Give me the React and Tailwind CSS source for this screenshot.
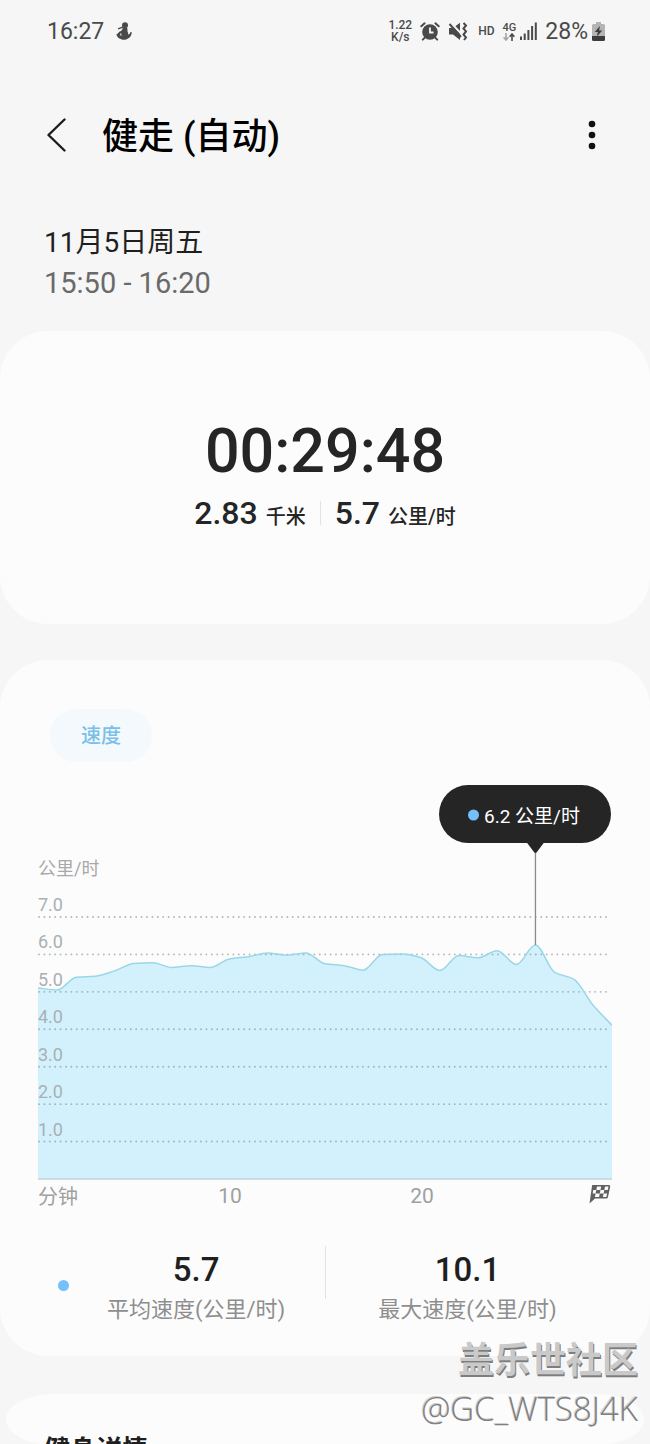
import { useState } from "react";

const speeds = [
  5.1, 5.05, 5.39, 5.42, 5.56, 5.76, 5.78, 5.65, 5.7, 5.65, 5.88, 5.94, 6.04,
  5.98, 6.04, 5.75, 5.7, 5.58, 6.0, 6.01, 5.92, 5.57, 5.97, 5.91, 6.1, 5.73,
  6.25, 5.52, 5.34, 4.65, 4.11,
];

const CHART_WIDTH = 574;
const BASELINE = 394;
const UNIT = 37.43;
const PEAK = 26;

const toX = (i) => (i * CHART_WIDTH) / (speeds.length - 1);
const toY = (v) => BASELINE - v * UNIT;

// monotone cubic, flat at every local high and low
function buildLine(values) {
  const step = toX(1);
  const ys = values.map(toY);
  const slopes = ys.map((y, i) => {
    if (i === 0) return (ys[1] - y) / step;
    if (i === ys.length - 1) return (y - ys[i - 1]) / step;
    const a = (y - ys[i - 1]) / step;
    const b = (ys[i + 1] - y) / step;
    return a * b <= 0 ? 0 : (2 * a * b) / (a + b);
  });
  let d = `M0 ${ys[0]}`;
  for (let i = 1; i < ys.length; i++) {
    const third = step / 3;
    d += ` C${toX(i - 1) + third} ${ys[i - 1] + slopes[i - 1] * third} ${
      toX(i) - third
    } ${ys[i] - slopes[i] * third} ${toX(i)} ${ys[i]}`;
  }
  return d;
}

function StatusBar() {
  return (
    <div className="flex h-[62px] items-center justify-between pl-[47px] pr-[45px] text-[#4a4a4a]">
      <div className="flex items-center gap-3 text-[23px]">
        <span className="pt-0.5">16:27</span>
        <svg width="16" height="18" viewBox="0 0 16 18" fill="currentColor">
          <circle cx="9" cy="3.2" r="3" />
          <path d="M1.800 6.200 7 4.200l.5 1.200L2.400 7.600z" />
          <path d="M6.500 6h4.600c.8 1 .1 2 .4 3.200.3 1.200.9 1.800.7 3.400 1.300-.3 1.900-1.100 2-2.400l1.500-.2c.1 4-2.600 7.200-7 7.700C4.600 18 1 15.800.4 12 1.500 12 2 11.200 2.800 10.200 4 9 6.700 9 6.500 6zM4.400 11.500c-.6 1.200 0 2.200 1.200 2.500-.5-1-.4-1.700 0-2.400z" />
        </svg>
      </div>
      <div className="flex items-center">
        <div className="mr-2 flex flex-col items-center text-xs font-medium leading-3">
          <span>1.22</span>
          <span>K/s</span>
        </div>
        <svg className="mr-2" width="20" height="19" viewBox="0 0 20 19">
          <g fill="none" stroke="currentColor" strokeWidth="2" strokeLinecap="round">
            <path d="M1.300 4.300 4.600 1.300M18.700 4.300l-3.300-3M4.800 15.600l-2 2M15.200 15.600l2 2" />
          </g>
          <circle cx="10" cy="10" r="7.800" fill="currentColor" />
          <path d="M10 5.500V10.500H13.500" fill="none" stroke="#f6f6f6" strokeWidth="1.800" />
        </svg>
        <svg className="mr-[10px]" width="20" height="19" viewBox="0 0 20 19">
          <path d="M1 6h4L12 .8v17.200L5 12.500H1z" fill="currentColor" />
          <path d="M3.500 1.500 13 11.500" stroke="#f6f6f6" strokeWidth="2" />
          <path d="M1.500 2 13 15" stroke="currentColor" strokeWidth="2" />
          <path d="m15.500 1 2.500 2.500-2.500 3L18 9.500l-2.500 3 2.500 3-2 2.500" fill="none" stroke="currentColor" strokeWidth="2" />
        </svg>
        <span className="mr-2 text-xs font-medium">HD</span>
        <div className="flex flex-col items-center text-[11px] font-medium leading-[11px]">
          <span>4G</span>
          <svg width="12" height="8" viewBox="0 0 12 8" fill="none" strokeWidth="1.600">
            <path d="M3 0v7M.6 4.300 3 7l2.400-2.700" stroke="#a5a5a5" />
            <path d="M9 8V1M6.600 3.700 9 1l2.400 2.700" stroke="currentColor" />
          </svg>
        </div>
        <svg className="ml-1 mr-2" width="17" height="18" viewBox="0 0 17 18" fill="currentColor">
          <path d="M0 14.500h2V18H0zM3.700 11.500h2V18h-2zM7.400 8h2v10h-2zM11.100 4h2v14h-2zM14.800.5h2V18h-2z" />
        </svg>
        <span className="mr-1 pt-0.5 text-[23px]">28%</span>
        <svg width="13" height="19" viewBox="0 0 13 19">
          <path d="M4 0h5v2h2.500Q13 2 13 3.500V14H0V3.500Q0 2 1.500 2H4z" fill="#b4b4b4" />
          <path d="M0 14h13v3.500q0 1.500-1.500 1.500h-10Q0 19 0 17.500z" fill="#3c3c3c" />
          <path d="M7.800 4 2.800 10h3l-.8 4.500L10.200 8.500h-3z" fill="#3c3c3c" />
        </svg>
      </div>
    </div>
  );
}

function Header() {
  return (
    <header className="mt-[46px] flex h-[54px] items-center pl-[47px] pr-[46px]">
      <button aria-label="返回" className="mr-9">
        <svg width="19" height="34" viewBox="0 0 19 34" fill="none">
          <path d="M17.500 1.500 1.500 17l16 15.500" stroke="#1c1c1c" strokeWidth="2.400" strokeLinecap="round" strokeLinejoin="round" />
        </svg>
      </button>
      <h1 className="flex-1 pt-1 text-4xl font-medium text-black">健走 (自动)</h1>
      <button aria-label="更多选项" className="w-6">
        <svg className="mx-auto" width="8" height="30" viewBox="0 0 8 30" fill="#111">
          <circle cx="4" cy="4" r="3.300" />
          <circle cx="4" cy="15" r="3.300" />
          <circle cx="4" cy="26" r="3.300" />
        </svg>
      </button>
    </header>
  );
}

function SpeedChart() {
  const line = buildLine(speeds);
  const peakX = toX(PEAK);

  return (
    <svg className="mt-[23px] block w-full" viewBox="0 0 574 430">
      <path d={`${line} V${BASELINE} H0 Z`} fill="#d3f1fd" />
      {[1, 2, 3, 4, 5, 6, 7].map((v) => (
        <g key={v}>
          <line
            x1="1"
            x2="571"
            y1={toY(v)}
            y2={toY(v)}
            stroke="#7b8a90"
            strokeOpacity="0.6"
            strokeWidth="1.900"
            strokeDasharray="0 5.400"
            strokeLinecap="round"
          />
          <text x="0" y={toY(v) - 6} fontSize="18" fill="#a9b0b3">
            {v.toFixed(1)}
          </text>
        </g>
      ))}
      <path d={line} fill="none" stroke="#9ad7e6" strokeWidth="1.500" />
      <line x1="0" x2={CHART_WIDTH} y1={BASELINE} y2={BASELINE} stroke="#c3d3da" strokeWidth="1.500" />

      <text x="0" y="90" fontSize="18" fill="#a8a8a8">公里/时</text>
      <text x="0" y="419" fontSize="20" fill="#a0a0a0">分钟</text>
      <text x="192" y="418" fontSize="21" textAnchor="middle" fill="#a0a0a0">10</text>
      <text x="384" y="418" fontSize="21" textAnchor="middle" fill="#a0a0a0">20</text>

      <g transform="translate(551 400)">
        <path d="M3.500 0H20q1.500 0 1.200 1.500L19 12q-.3 1.500-1.800 1.500H6L.5 18.500 3 1q0-1 .5-1z" fill="#616161" />
        <path d="M8 1.500h4.200l-.7 3.500H7.300zM16 1.500h3.500l-.7 3.500h-3.500zM11.500 5h3.800l-.7 3.500h-3.800zM4.200 5h3.100l-.7 3.500H3.700zM6.600 8.500h4.200l-.7 3.500H5.900zM14.600 8.500h3.500l-.7 3.500h-3.500z" fill="#fafafa" />
      </g>

      <line x1={peakX} x2={peakX} y1="60" y2={toY(speeds[PEAK])} stroke="#8a8a8a" strokeWidth="1.300" />
      <rect x="401" y="0" width="172" height="58" rx="29" fill="#252525" />
      <path d={`M${peakX - 9} 57h18l-7.500 10q-1.500 2-3 0z`} fill="#252525" />
      <circle cx="435.500" cy="30" r="5.500" fill="#74c0fb" />
      <text x="446" y="38" fontSize="19" fill="#fff">6.2 公里/时</text>
    </svg>
  );
}

function Stat({ value, label }) {
  return (
    <div className="pt-1 text-center">
      <p className="text-[33px] font-medium leading-10 text-[#1f1f1f]">{value}</p>
      <p className="text-[22px] leading-10 text-[#8e8e8e]">{label}</p>
    </div>
  );
}

function App() {
  const [tab, setTab] = useState("speed");

  return (
    <div
      lang="zh-CN"
      className="relative min-h-screen overflow-hidden bg-[#f6f6f6] font-['Roboto','Noto_Sans_CJK_SC',sans-serif]"
    >
      <StatusBar />
      <Header />

      <div className="mt-[61px] px-11 leading-10">
        <p className="text-[28px] text-[#1f1f1f]">11月5日周五</p>
        <p className="text-[29px] text-[#6a6a6a]">15:50 - 16:20</p>
      </div>

      <section className="mt-7 rounded-[48px] bg-[#fcfcfc] pb-[91px] pt-[88px] text-[#252525]">
        <p className="text-center text-[61px] font-medium leading-[64px]">00:29:48</p>
        <div className="mt-[10px] flex h-10 items-center justify-center">
          <p className="text-xl font-medium">
            <span className="mr-2 text-[32px]">2.83</span>千米
          </p>
          <div className="mx-[14px] h-6 w-px bg-[#e2e2e2]" />
          <p className="text-xl font-medium">
            <span className="mr-2 text-[32px]">5.7</span>公里/时
          </p>
        </div>
      </section>

      <section className="mt-9 rounded-[48px] bg-[#fcfcfc] px-[38px] pb-[26px] pt-[49px]">
        <button
          onClick={() => setTab("speed")}
          aria-pressed={tab === "speed"}
          className="ml-3 block h-[53px] rounded-full bg-[#f3f9fd] px-[31px] text-xl font-medium text-[#79bfea]"
        >
          速度
        </button>

        <SpeedChart />

        <div className="mt-[31px] flex">
          <div className="ml-5 mr-[38px] mt-[34px] h-[11px] w-[11px] rounded-full bg-[#74c0fb]" />
          <Stat value="5.7" label="平均速度(公里/时)" />
          <div className="ml-10 mr-[52px] h-[53px] w-px bg-[#e2e2e2]" />
          <Stat value="10.1" label="最大速度(公里/时)" />
        </div>
      </section>

      <section className="mx-[6px] mt-[38px] h-[51px] overflow-hidden rounded-[48px/26px] bg-[#fcfcfc] pl-[38px] pt-9">
        <h2 className="text-[26px] font-bold leading-10 text-[#1f1f1f]">健身详情</h2>
      </section>

      <div className="pointer-events-none absolute bottom-3 right-3 text-right">
        <p className="text-4xl font-bold leading-[48px] text-[#c9c9c9] [text-shadow:1px_2px_0_#7d7d7d]">
          盖乐世社区
        </p>
        <p className="font-['Open_Sans','Noto_Sans',sans-serif] text-[33px] font-light leading-[48px] text-[#7f7f7f] [text-shadow:-1px_-1px_0_#d0d0d0]">
          @GC_WTS8J4K
        </p>
      </div>
    </div>
  );
}

export default App;
